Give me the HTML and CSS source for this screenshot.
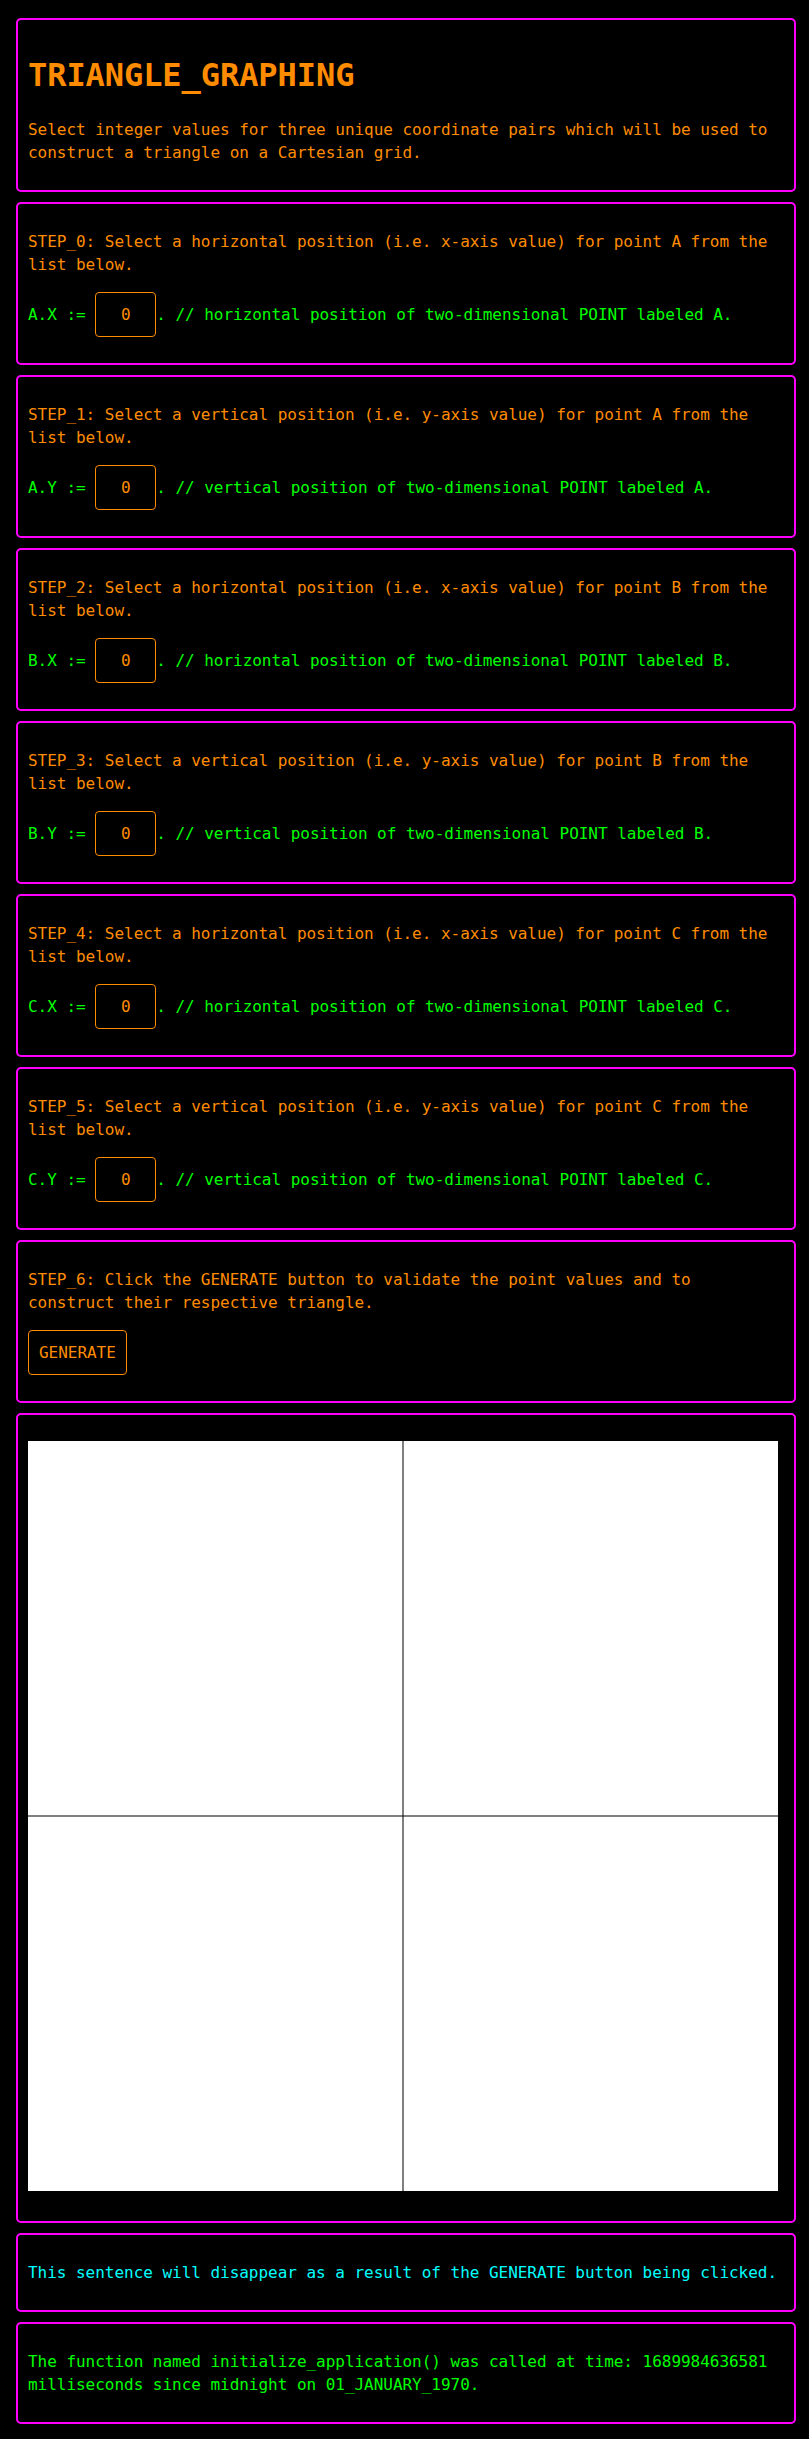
FILE: index.html
```html
<!DOCTYPE html>
<html>
<head>
<meta charset="utf-8">
<title>TRIANGLE_GRAPHING</title>
<link rel="stylesheet" href="styles.css">
</head>
<body>
<div class="page">
  <div class="card">
    <h1 class="title">TRIANGLE_GRAPHING</h1>
    <p class="txt">Select integer values for three unique coordinate pairs which will be used to construct a triangle on a Cartesian grid.</p>
  </div>

  <div class="card">
    <p class="txt">STEP_0: Select a horizontal position (i.e. x-axis value) for point A from the list below.</p>
    <p class="row">A.X := <select class="num"><option>0</option></select>. // horizontal position of two-dimensional POINT labeled A.</p>
  </div>

  <div class="card">
    <p class="txt">STEP_1: Select a vertical position (i.e. y-axis value) for point A from the list below.</p>
    <p class="row">A.Y := <select class="num"><option>0</option></select>. // vertical position of two-dimensional POINT labeled A.</p>
  </div>

  <div class="card">
    <p class="txt">STEP_2: Select a horizontal position (i.e. x-axis value) for point B from the list below.</p>
    <p class="row">B.X := <select class="num"><option>0</option></select>. // horizontal position of two-dimensional POINT labeled B.</p>
  </div>

  <div class="card">
    <p class="txt">STEP_3: Select a vertical position (i.e. y-axis value) for point B from the list below.</p>
    <p class="row">B.Y := <select class="num"><option>0</option></select>. // vertical position of two-dimensional POINT labeled B.</p>
  </div>

  <div class="card">
    <p class="txt">STEP_4: Select a horizontal position (i.e. x-axis value) for point C from the list below.</p>
    <p class="row">C.X := <select class="num"><option>0</option></select>. // horizontal position of two-dimensional POINT labeled C.</p>
  </div>

  <div class="card">
    <p class="txt">STEP_5: Select a vertical position (i.e. y-axis value) for point C from the list below.</p>
    <p class="row">C.Y := <select class="num"><option>0</option></select>. // vertical position of two-dimensional POINT labeled C.</p>
  </div>

  <div class="card">
    <p class="txt">STEP_6: Click the GENERATE button to validate the point values and to construct their respective triangle.</p>
    <p class="btnrow"><button class="btn">GENERATE</button></p>
  </div>

  <div class="card">
    <svg class="grid" width="750" height="750" viewBox="0 0 750 750">
      <rect x="0" y="0" width="750" height="750" fill="#ffffff"/>
      <rect x="374" y="0" width="2" height="750" fill="rgba(0,0,0,0.5)"/>
      <rect x="0" y="374" width="750" height="2" fill="rgba(0,0,0,0.5)"/>
    </svg>
  </div>

  <div class="card">
    <p class="txt cyan">This sentence will disappear as a result of the GENERATE button being clicked.</p>
  </div>

  <div class="card">
    <p class="txt green">The function named initialize_application() was called at time: 1689984636581 milliseconds since midnight on 01_JANUARY_1970.</p>
  </div>
</div>
</body>
</html>
```

FILE: styles.css
```css
html, body {
  margin: 0;
  padding: 0;
  background: #000000;
}

body {
  font-family: "DejaVu Sans Mono", "Liberation Mono", monospace;
  font-size: 16px;
  letter-spacing: -0.03px;
  color: #ff8c00;
}

.page {
  padding: 18px 13px 15px 16px;
}

.card {
  border: 2px solid #ff00ff;
  border-radius: 5px;
  padding: 10px;
  margin-bottom: 10px;
}

.title {
  font-size: 32px;
  font-weight: bold;
  line-height: 45px;
  letter-spacing: -0.07px;
  margin: 23px 0 20px 0;
  color: #ff8c00;
}

.title + .txt {
  margin-top: 20px;
}

.txt {
  margin: 16px 0;
  line-height: 23px;
}

.row {
  margin: 16px 0;
  line-height: 23px;
  color: #00ff00;
}

.num {
  -webkit-appearance: none;
  appearance: none;
  box-sizing: border-box;
  width: 61px;
  height: 45px;
  padding: 0;
  background: #000000;
  color: #ff8c00;
  border: 1px solid #ff8c00;
  border-radius: 4px;
  font-family: inherit;
  font-size: 16px;
  text-align: center;
  text-align-last: center;
  vertical-align: baseline;
}

.btnrow {
  margin: 16px 0;
  line-height: 23px;
}

.btn {
  box-sizing: border-box;
  height: 45px;
  padding: 0 10px;
  background: #000000;
  color: #ff8c00;
  border: 1px solid #ff8c00;
  border-radius: 4px;
  font-family: inherit;
  font-size: 16px;
  letter-spacing: inherit;
}

.grid {
  display: block;
  margin: 16px 0 20px 0;
}

.cyan {
  color: #00ffff;
}

.green {
  color: #00ff00;
}
```
